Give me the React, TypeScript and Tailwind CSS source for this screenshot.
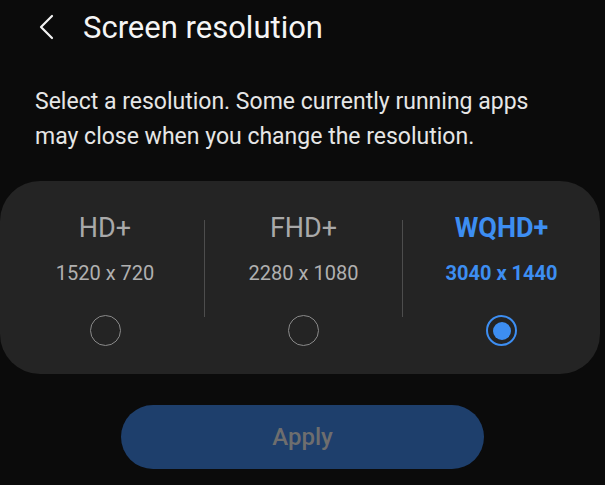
const options = [
  { id: 'hd', label: 'HD+', size: '1520 x 720' },
  { id: 'fhd', label: 'FHD+', size: '2280 x 1080' },
  { id: 'wqhd', label: 'WQHD+', size: '3040 x 1440' },
];

function Radio({ checked }: { checked: boolean }) {
  if (checked) {
    return (
      <div className="w-[31px] h-[31px] rounded-full border-2 border-[#3d8ef2] flex items-center justify-center">
        <div className="w-[18px] h-[18px] rounded-full bg-[#3d8ef2]" />
      </div>
    );
  }
  return <div className="w-[31px] h-[31px] rounded-full border-[1.5px] border-[#8a8a8a]" />;
}

export default function App() {
  const selected = 'wqhd';

  return (
    <div className="w-[605px] h-[485px] bg-[#0b0b0b] overflow-hidden font-['Roboto',sans-serif]">
      {/* Header */}
      <div className="flex items-center h-[54px] pl-[38px]">
        <svg width="16" height="26" viewBox="0 0 16 26" fill="none" className="mt-[-1px]">
          <path d="M14 2 L3 13 L14 24" stroke="#f2f2f2" strokeWidth="2.2" strokeLinecap="round" strokeLinejoin="round" />
        </svg>
        <h1 className="ml-[29px] text-[31px] text-[#f5f5f5] leading-none">Screen resolution</h1>
      </div>

      {/* Description */}
      <p className="mt-[30px] pl-[35px] pr-[60px] text-[23px] leading-[35px] text-[#e6e6e6]">
        Select a resolution. Some currently running apps may close when you change the resolution.
      </p>

      {/* Options card */}
      <div className="mt-[27px] w-[600px] h-[193px] rounded-[40px] bg-[#242424] flex pt-[30px] pl-[6px]">
        {options.map((opt, i) => {
          const active = opt.id === selected;
          return (
            <div key={opt.id} className="flex flex-1">
              {i > 0 && <div className="w-px h-[97px] mt-[9px] bg-[#4d4d4d]" />}
              <div className="flex-1 flex flex-col items-center">
                <div
                  className={`text-[27px] leading-[34px] ${active ? 'font-bold text-[#3d8ef2]' : 'text-[#a9a9a9]'}`}
                >
                  {opt.label}
                </div>
                <div
                  className={`mt-[14px] text-[20px] leading-[28px] ${active ? 'font-bold text-[#3d8ef2]' : 'text-[#b0b0b0]'}`}
                >
                  {opt.size}
                </div>
                <div className="mt-[28px]">
                  <Radio checked={active} />
                </div>
              </div>
            </div>
          );
        })}
      </div>

      {/* Apply */}
      <button className="block mx-auto mt-[31px] w-[363px] h-[64px] rounded-full bg-[#1e3f6c] text-[24px] font-medium text-[#6e6e6e]">
        Apply
      </button>
    </div>
  );
}
